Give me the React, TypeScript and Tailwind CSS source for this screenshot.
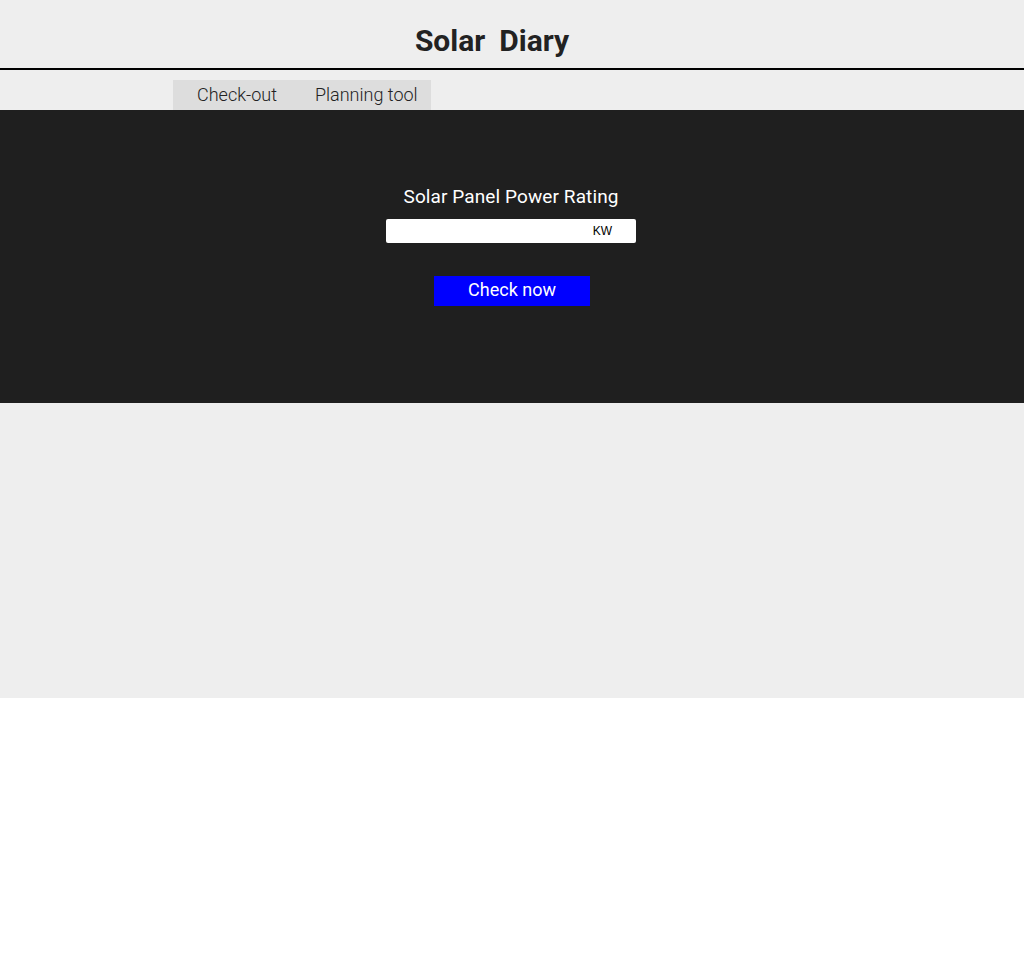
import React from "react";

function Header() {
  return (
    <header className="h-[70px] border-b-2 border-black bg-[#eeeeee] pt-[23px]">
      <h1 className="flex justify-center gap-[14px] pr-10 text-[30px] font-bold leading-9 text-[#222222]">
        <span>Solar</span>
        <span>Diary</span>
      </h1>
    </header>
  );
}

function Tabs() {
  return (
    <nav className="h-10 bg-[#eeeeee] pt-[10px] pl-[173px]">
      <div className="flex h-[30px] w-fit bg-[#dddddd] text-[18px] font-light leading-[30px] text-[#222222]">
        <a className="pl-6 pr-[19px]">Check-out</a>
        <a className="pl-[19px] pr-[13px]">Planning tool</a>
      </div>
    </nav>
  );
}

function PowerForm() {
  return (
    <section className="flex h-[293px] flex-col items-center bg-[#1f1f1f] pt-[73px]">
      <label className="mr-[2px] text-[19px] leading-7 tracking-[0.1px] text-white">
        Solar Panel Power Rating
      </label>
      <div className="mt-2 mr-[2px] flex h-6 w-[250px] items-center rounded-[2px] bg-white pr-6">
        <input className="h-full min-w-0 flex-1 bg-transparent px-1 text-xs outline-none" />
        <span className="font-['Liberation_Sans'] text-[12px] text-black">KW</span>
      </div>
      <button className="mt-[33px] h-[30px] w-[156px] bg-[#0000ff] pb-[2px] text-[18px] leading-[28px] text-white">
        Check now
      </button>
    </section>
  );
}

export default function App() {
  return (
    <div className="font-['Roboto',sans-serif]">
      <Header />
      <Tabs />
      <PowerForm />
      <section className="h-[295px] bg-[#eeeeee]" />
    </div>
  );
}
